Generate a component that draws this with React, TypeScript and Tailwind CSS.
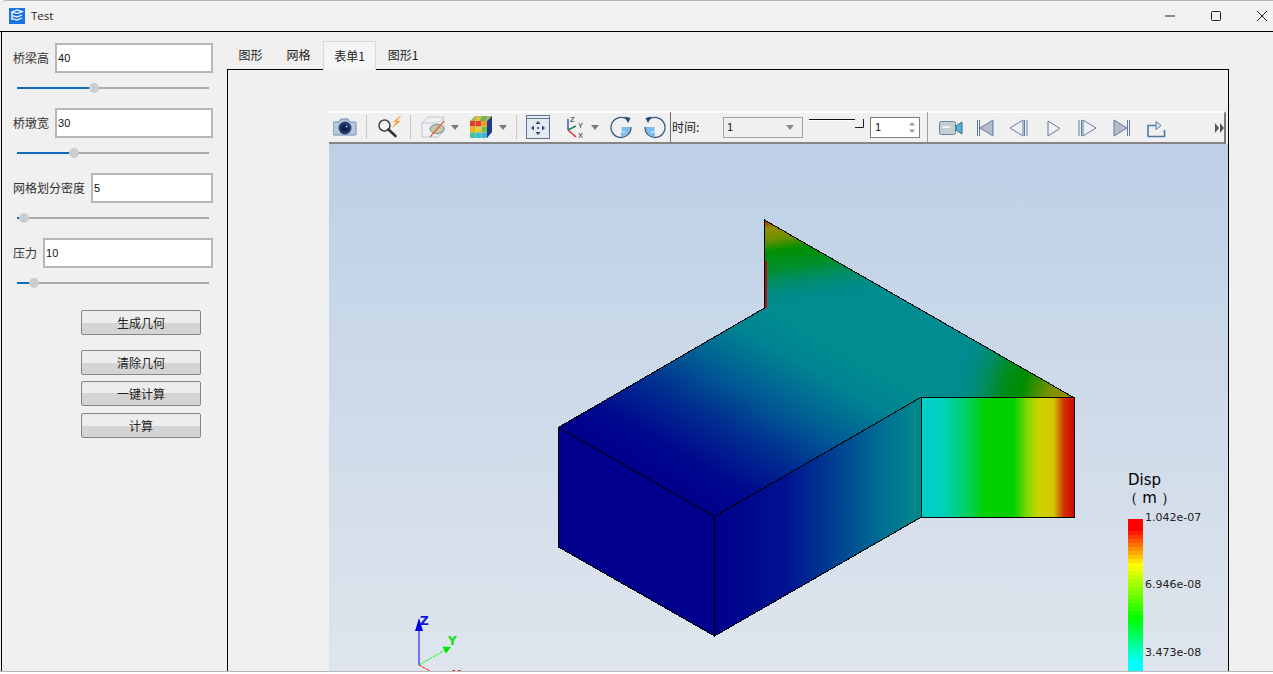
import React from "react";

const cjk = "font-['Noto_Sans_CJK_SC','Noto_Sans',sans-serif]";

const fields = [
  { label: "桥梁高", value: "40", thumb: 77 },
  { label: "桥墩宽", value: "30", thumb: 57 },
  { label: "网格划分密度", value: "5", thumb: 7 },
  { label: "压力", value: "10", thumb: 17 },
];

const buttons = [
  { text: "生成几何", cls: "mt-[12px]" },
  { text: "清除几何", cls: "mt-[15px]" },
  { text: "一键计算", cls: "mt-[6px]" },
  { text: "计算", cls: "mt-[7px]" },
];

const Field = ({ label, value, thumb }: { label: string; value: string; thumb: number }) => (
  <div className="mb-[5px]">
    <div className="flex h-[30px] items-center gap-[6px]">
      <span className="text-[12px] text-[#333]">{label}</span>
      <div className="flex h-[30px] flex-1 items-center border-2 border-[#b7b7b7] bg-white pl-[1px] font-['Liberation_Sans',sans-serif] text-[11px] text-[#111]">
        {value}
      </div>
    </div>
    <div className="relative ml-[4px] flex h-[30px] w-[192px] items-center">
      <div className="h-[2px] w-full bg-[#a9a9a9]" />
      <div className="absolute left-0 top-[14px] h-[2px] bg-[#0f6cbd]" style={{ width: thumb }} />
      <div className="absolute top-[10px] h-[10px] w-[10px] rounded-full bg-[#cdcdcd]" style={{ left: thumb - 5 }} />
    </div>
  </div>
);

const PushButton = ({ text, cls }: { text: string; cls: string }) => (
  <div className={`${cls} ml-[68px] flex h-[25px] w-[120px] items-center justify-center rounded-[2px] border border-[#858585] bg-[linear-gradient(#ededed_0%,#ededed_50%,#d4d4d4_50%,#d4d4d4_100%)] text-[12px] text-[#222]`}>
    {text}
  </div>
);

const Sep = ({ cls }: { cls: string }) => <div className={`${cls} h-[24px] w-[1px] shrink-0 bg-[#c8c8c8]`} />;

const DropArrow = ({ cls }: { cls: string }) => (
  <svg className={`${cls} shrink-0`} width="8" height="5" viewBox="0 0 8 5">
    <path d="M0 0h8L4 5z" fill="#77797c" />
  </svg>
);

const CameraIcon = () => (
  <svg className="ml-[4px] shrink-0" width="24" height="20" viewBox="0 0 24 20">
    <path d="M1 5h5l2-3h7l2 3h5a1 1 0 0 1 1 1v11a1 1 0 0 1-1 1H1a1 1 0 0 1-1-1V6a1 1 0 0 1 1-1z" fill="#b9c9dc" stroke="#6e8cab" />
    <circle cx="12" cy="11" r="6.500" fill="#22406f" />
    <circle cx="12" cy="11" r="3.800" fill="#0d1f48" />
    <circle cx="13.500" cy="9.500" r="1" fill="#a9c4e6" />
  </svg>
);

const SearchIcon = () => (
  <svg className="ml-[11px] shrink-0" width="24" height="24" viewBox="0 0 24 24">
    <path d="M22 1l-7 6h3l-4 6 9-7h-4l4-5z" fill="#efa93b" />
    <circle cx="6.500" cy="10.500" r="5.500" fill="#f4f6f8" stroke="#444" strokeWidth="1.500" />
    <path d="M10.500 14.500l7 6.500" stroke="#333" strokeWidth="2.600" strokeLinecap="round" />
  </svg>
);

const ClipCubeIcon = () => (
  <svg className="ml-[10px] shrink-0" width="24" height="24" viewBox="0 0 24 24">
    <path d="M1 8l6-6h16v14l-6 6H1z" fill="#eef0f3" stroke="#c2c8d0" />
    <path d="M1 8h16v14M17 8l6-6" fill="none" stroke="#c2c8d0" />
    <ellipse cx="16" cy="14" rx="7" ry="4.500" fill="#c8c6ae" stroke="#7f8a96" />
    <path d="M9 22L23 6" stroke="#d9662a" strokeWidth="1.200" />
  </svg>
);

const cubeCells = [
  ["#d8402c", "#e8392c", "#e8a020"],
  ["#f0b020", "#e8d030", "#70c048"],
  ["#48c0a0", "#30c0d0", "#40b0e0"],
];

const RainbowCubeIcon = () => (
  <svg className="ml-[10px] shrink-0" width="24" height="24" viewBox="0 0 24 24">
    <path d="M1 6l5-5h17l-5 5z" fill="#a9b85a" />
    <path d="M6 6l2-5h5l-2 5z" fill="#e0c040" />
    <path d="M11 6l2-5h5l-2 5z" fill="#70b060" />
    <path d="M18 6l5-5v16l-5 6z" fill="#22388c" />
    {cubeCells.map((row, r) =>
      row.map((c, i) => <rect key={`${r}-${i}`} x={1 + i * 5.667} y={6 + r * 5.667} width="5.667" height="5.667" fill={c} />)
    )}
    <path d="M6.700 6v17M12.300 6v17M1 11.700h17M1 17.300h17" stroke="#c8c860" strokeWidth=".5" />
  </svg>
);

const FitIcon = () => (
  <svg className="ml-[9px] shrink-0" width="24" height="24" viewBox="0 0 24 24">
    <rect x=".5" y=".5" width="23" height="23" fill="#e6eaef" stroke="#5d7594" />
    <path d="M.5 3.500h23" stroke="#5d7594" />
    <g fill="#1f4a78">
      <path d="M12 6l2.500 3h-5zM12 20l2.500-3h-5zM5 13l3-2.500v5zM19 13l-3-2.500v5z" />
    </g>
    <circle cx="12" cy="13" r="1" fill="#1f4a78" />
  </svg>
);

const AxesIcon = () => (
  <svg className="ml-[12px] shrink-0" width="24" height="24" viewBox="0 0 24 24">
    <path d="M6 15V4" stroke="#2050c0" strokeWidth="1.400" />
    <path d="M6 15l8-4" stroke="#1c8a4c" strokeWidth="1.400" />
    <path d="M6 15l8 7" stroke="#e02828" strokeWidth="1.400" />
    <text x="8" y="7" fontSize="7.500" fill="#222" fontFamily="Liberation Sans">Z</text>
    <text x="16" y="13" fontSize="7.500" fill="#222" fontFamily="Liberation Sans">Y</text>
    <text x="16" y="23" fontSize="7.500" fill="#222" fontFamily="Liberation Sans">X</text>
  </svg>
);

const RotateIcon = ({ flip, cls }: { flip?: boolean; cls: string }) => (
  <svg className={`${cls} shrink-0 ${flip ? "-scale-x-100" : ""}`} width="24" height="24" viewBox="0 0 24 24">
    <path d="M12 12h9.500a9.500 9.500 0 0 1-9.500 9.500z" fill="#7fbcec" />
    <path d="M12 12v5h4.500" fill="none" stroke="#fff" strokeWidth=".8" />
    <path d="M17 3.800A10 10 0 1 0 22 12" fill="none" stroke="#3a5a7c" strokeWidth="1.300" />
    <path d="M15.500 1.500l6 1.500-2.500 5z" fill="#1f4a78" />
  </svg>
);

const VideoIcon = () => (
  <svg className="ml-[4px] shrink-0" width="24" height="16" viewBox="0 0 24 16">
    <rect x=".5" y="1.500" width="16" height="13" rx="2" fill="#c6ccd4" stroke="#6f8298" />
    <rect x="3" y="6" width="8" height="2" fill="#eef1f4" />
    <path d="M17 6l6-4v12l-6-4z" fill="#4fb8d8" stroke="#356c90" />
  </svg>
);

const stroke = "#5f7da3";

const FirstIcon = () => (
  <svg className="ml-[13px] shrink-0" width="18" height="18" viewBox="0 0 18 18">
    <path d="M17 1L4 9l13 8z" fill="#b5bcc7" stroke={stroke} />
    <path d="M1.500 1v16M3.500 1v16" stroke={stroke} />
  </svg>
);
const PrevIcon = () => (
  <svg className="ml-[15px] shrink-0" width="19" height="18" viewBox="0 0 19 18">
    <path d="M14 1L1 9l13 8z" fill="#eef0f3" stroke={stroke} />
    <path d="M15.500 1v16M18 1v16" stroke={stroke} />
  </svg>
);
const PlayIcon = () => (
  <svg className="ml-[19px] shrink-0" width="14" height="17" viewBox="0 0 14 17">
    <path d="M1 1l12 7.500L1 16z" fill="#eef0f3" stroke={stroke} />
  </svg>
);
const NextIcon = () => (
  <svg className="ml-[17px] shrink-0" width="19" height="18" viewBox="0 0 19 18">
    <path d="M5 1l13 8-13 8z" fill="#eef0f3" stroke={stroke} />
    <path d="M1 1v16M3.500 1v16" stroke={stroke} />
  </svg>
);
const LastIcon = () => (
  <svg className="ml-[16px] shrink-0" width="18" height="18" viewBox="0 0 18 18">
    <path d="M1 1l13 8-13 8z" fill="#b5bcc7" stroke={stroke} />
    <path d="M14.500 1v16M16.500 1v16" stroke={stroke} />
  </svg>
);
const ExportIcon = () => (
  <svg className="ml-[16px] shrink-0" width="19" height="19" viewBox="0 0 19 19">
    <path d="M1 17.500V6.500h8" fill="none" stroke="#4f7aa8" strokeWidth="1.600" />
    <path d="M9 2.500l5 4-5 4z" fill="#dbe6f1" stroke="#4f7aa8" />
    <path d="M1 17.500h16.500V11" fill="none" stroke="#4f7aa8" strokeWidth="1.600" />
  </svg>
);

const Toolbar = () => (
  <div className="mr-[2px] flex h-[33px] shrink-0 items-center border-r-2 border-b-2 border-t-2 border-r-[#7b7b7b] border-b-[#858585] border-t-white bg-[#f0f0f0] pb-[1px]">
    <CameraIcon />
    <Sep cls="ml-[9px]" />
    <SearchIcon />
    <Sep cls="ml-[8px]" />
    <ClipCubeIcon />
    <DropArrow cls="ml-[6px]" />
    <RainbowCubeIcon />
    <DropArrow cls="ml-[6px]" />
    <Sep cls="ml-[9px]" />
    <FitIcon />
    <AxesIcon />
    <DropArrow cls="ml-[5px]" />
    <RotateIcon cls="ml-[10px]" />
    <RotateIcon flip cls="ml-[10px]" />
    <div className="ml-[3px] h-[30px] w-[1px] shrink-0 bg-[#707070]" />
    <span className="ml-[1px] w-[51px] shrink-0 text-[12px] text-[#222]">时间:</span>
    <div className="flex h-[21px] w-[80px] shrink-0 items-center justify-between border border-[#a3a3a3] pl-[3px] pr-[8px] font-['Liberation_Sans',sans-serif] text-[11px] text-[#111]">
      1
      <svg width="8" height="5" viewBox="0 0 8 5">
        <path d="M0 0h8L4 5z" fill="#8a8a8a" />
      </svg>
    </div>
    <svg className="ml-[6px] mb-[6px] shrink-0" width="55" height="10" viewBox="0 0 55 10">
      <path d="M0 .5h46" stroke="#111" />
      <path d="M0 1.500h46" stroke="#fff" />
      <path d="M54.500 0v8.500H46" fill="none" stroke="#222" />
    </svg>
    <div className="ml-[6px] flex h-[21px] w-[50px] shrink-0 items-center justify-between border border-[#7e7e7e] bg-white pl-[4px] pr-[4px] font-['Liberation_Sans',sans-serif] text-[11px] text-[#111]">
      1
      <svg width="6" height="11" viewBox="0 0 6 11">
        <path d="M3 0l3 3.500H0zM3 11l3-3.500H0z" fill="#9a9a9a" />
      </svg>
    </div>
    <div className="ml-[7px] h-[30px] w-[1px] shrink-0 bg-[#a0a0a0]" />
    <div className="ml-[7px] flex h-[30px] flex-1 items-center self-stretch">
      <VideoIcon />
      <FirstIcon />
      <PrevIcon />
      <PlayIcon />
      <NextIcon />
      <LastIcon />
      <ExportIcon />
      <svg className="ml-auto shrink-0" width="9" height="14" viewBox="0 0 9 14">
        <path d="M0 2l4 5-4 5z M5 2l4 5-4 5z" fill="#555" />
      </svg>
    </div>
  </div>
);

// Field result drawn on the model, coordinates are the screen ones
const ModelSvg = () => (
  <svg className="absolute left-0 top-0" width="899" height="530" viewBox="329 144 899 530">
    <defs>
      <linearGradient id="topFace" gradientUnits="userSpaceOnUse" x1="558" y1="427" x2="660" y2="248.500">
        <stop offset="0" stopColor="#00008c" />
        <stop offset=".18" stopColor="#00088e" />
        <stop offset=".42" stopColor="#003090" />
        <stop offset=".62" stopColor="#005c94" />
        <stop offset=".85" stopColor="#008392" />
        <stop offset="1" stopColor="#008c90" />
      </linearGradient>
      <linearGradient id="sideFace" gradientUnits="userSpaceOnUse" x1="714" y1="0" x2="921" y2="0">
        <stop offset="0" stopColor="#00008c" />
        <stop offset=".35" stopColor="#001290" />
        <stop offset=".63" stopColor="#004a94" />
        <stop offset=".82" stopColor="#007092" />
        <stop offset="1" stopColor="#008a8c" />
      </linearGradient>
      <linearGradient id="endFace" gradientUnits="userSpaceOnUse" x1="921" y1="0" x2="1075" y2="0">
        <stop offset="0" stopColor="#00d0c8" />
        <stop offset=".14" stopColor="#00d0bc" />
        <stop offset=".3" stopColor="#00d060" />
        <stop offset=".42" stopColor="#00d000" />
        <stop offset=".6" stopColor="#00d000" />
        <stop offset=".7" stopColor="#90d800" />
        <stop offset=".77" stopColor="#d0d000" />
        <stop offset=".86" stopColor="#d0c800" />
        <stop offset=".93" stopColor="#d03000" />
        <stop offset="1" stopColor="#d00000" />
      </linearGradient>
      <linearGradient id="apex" gradientUnits="userSpaceOnUse" x1="764" y1="220" x2="776" y2="308">
        <stop offset="0" stopColor="#a02800" />
        <stop offset=".1" stopColor="#909000" />
        <stop offset=".22" stopColor="#709000" />
        <stop offset=".36" stopColor="#009000" />
        <stop offset=".58" stopColor="#008f30" />
        <stop offset="1" stopColor="#008c90" stopOpacity="0" />
      </linearGradient>
      <radialGradient id="corner" gradientUnits="userSpaceOnUse" cx="1078" cy="400" r="125">
        <stop offset="0" stopColor="#a03000" />
        <stop offset=".1" stopColor="#909000" />
        <stop offset=".24" stopColor="#7a9000" />
        <stop offset=".46" stopColor="#008c00" />
        <stop offset=".62" stopColor="#008c20" />
        <stop offset=".82" stopColor="#008c60" stopOpacity=".6" />
        <stop offset="1" stopColor="#008c90" stopOpacity="0" />
      </radialGradient>
      <clipPath id="topClip">
        <polygon points="558,427 764.500,308 764.500,220 1074.500,398 921,397 714,516" />
      </clipPath>
    </defs>
    <g shapeRendering="crispEdges">
      <polygon points="558,427 714,516 714,636 558,547" fill="#00008c" />
      <polygon points="714,516 921,397 921,517 714,636" fill="url(#sideFace)" />
      <polygon points="558,427 764.500,308 764.500,220 1074.500,398 921,397 714,516" fill="url(#topFace)" />
      <g clipPath="url(#topClip)">
        <rect x="740" y="200" width="180" height="120" fill="url(#apex)" />
        <rect x="945" y="270" width="140" height="130" fill="url(#corner)" />
      </g>
      <rect x="921" y="397" width="153.500" height="120" fill="url(#endFace)" />
      <rect x="765" y="261" width="2" height="47" fill="#b01018" />
      <g fill="none" stroke="#000" strokeWidth="1">
        <path d="M558.500 427.500L714.500 516.500L921.500 397M714.500 516.500V636M558.500 427.500V547L714.500 636L921.500 517" />
        <path d="M558.500 427.500L764.500 308V220L1074.500 398V517H921.500V397H1074.500" />
      </g>
    </g>
    <g>
      <path d="M419 665V626" stroke="#0000ff" strokeWidth="1" />
      <path d="M419 618l4 13h-8z" fill="#0000e8" />
      <path d="M419 665l26-15" stroke="#00ff00" strokeDasharray="3 1" />
      <path d="M451 647l-8.500-.5 3.500 7z" fill="#00e800" />
      <path d="M419 665l11 6" stroke="#ff0000" strokeDasharray="3 1" />
      <text x="420" y="625" fontSize="12" fontWeight="700" fill="#1010e0" fontFamily="DejaVu Sans">Z</text>
      <text x="448" y="645" fontSize="12" fontWeight="700" fill="#10e010" fontFamily="DejaVu Sans">Y</text>
      <text x="452" y="679" fontSize="12" fontWeight="700" fill="#f01010" fontFamily="DejaVu Sans">X</text>
    </g>
  </svg>
);

const bandHue = (y: number) => {
  if (y < 8) return 0;
  if (y < 44) return ((y - 8) * 60) / 36;
  if (y < 98) return 60 + ((y - 44) * 60) / 54;
  return Math.min(180, 120 + ((y - 98) * 60) / 43);
};

const bands = Array.from({ length: 40 }, (_, i) => `hsl(${bandHue(i * 4)} 100% 50%)`);

const Legend = () => (
  <div className="absolute left-[799px] top-[327px] font-['DejaVu_Sans',sans-serif] text-black">
    <div className="text-[15px] leading-[18px]">Disp</div>
    <div className="-ml-[5px] whitespace-nowrap text-[15px] leading-[18px] tracking-[-0.3px]">（ m ）</div>
    <div className="relative mt-[12px] h-[160px] w-[15px]">
      {bands.map((c, i) => (
        <div key={i} className="h-[4px] w-full" style={{ backgroundColor: c }} />
      ))}
      <span className="absolute left-[17px] top-[-9px] whitespace-nowrap text-[11px] leading-[16px] text-[#222]">1.042e-07</span>
      <span className="absolute left-[17px] top-[58px] whitespace-nowrap text-[11px] leading-[16px] text-[#222]">6.946e-08</span>
      <span className="absolute left-[17px] top-[126px] whitespace-nowrap text-[11px] leading-[16px] text-[#222]">3.473e-08</span>
    </div>
  </div>
);

const TitleBar = () => (
  <div className="flex h-[31px] shrink-0 items-center rounded-tl-[6px] border-t border-t-[#b4b4b4] bg-[#f3f2f0] pl-[9px]">
    <svg width="16" height="16" viewBox="0 0 16 16">
      <rect width="16" height="16" fill="#1a73e8" />
      <path d="M3 4l5-2 5 1.500-5 2zM3 7.500l5 1.500 5-2M3 10.500l5 1.500 5-2" fill="none" stroke="#fff" strokeWidth="1.300" />
      <path d="M3 4v8" stroke="#fff" strokeWidth="1.300" />
    </svg>
    <span className="ml-[6px] font-['Open_Sans',sans-serif] text-[11.500px] text-[#222]">Test</span>
    <div className="ml-auto flex items-center">
      <svg width="10" height="2" viewBox="0 0 10 2" className="shrink-0">
        <path d="M0 1h10" stroke="#222" />
      </svg>
      <svg width="10" height="10" viewBox="0 0 10 10" className="ml-[36px] shrink-0">
        <rect x=".5" y=".5" width="9" height="9" rx="1" fill="none" stroke="#222" />
      </svg>
      <svg width="10" height="10" viewBox="0 0 10 10" className="ml-[36px] mr-[6px] shrink-0">
        <path d="M0 0l10 10M10 0L0 10" stroke="#222" />
      </svg>
    </div>
  </div>
);

const tabs = [
  { text: "图形", cls: "w-[47px]" },
  { text: "网格", cls: "w-[49px]" },
  { text: "表单1", cls: "w-[53px] h-[29px] border border-b-0 border-[#d9d9d9] bg-[#f4f4f4] z-10 -mb-[1px]" },
  { text: "图形1", cls: "w-[54px]" },
];

export default function App() {
  return (
    <div className={`flex h-[674px] w-[1273px] flex-col overflow-hidden bg-white ${cjk}`}>
      <TitleBar />
      <div className="flex h-[641px] shrink-0 border-t border-b border-t-black border-b-[#b8b8b8] bg-[#f0f0f0] pl-[1px]">
        <div className="w-[226px] shrink-0 border-l border-l-black pl-[11px] pr-[14px] pt-[11px]">
          {fields.map((f) => (
            <Field key={f.label} {...f} />
          ))}
          {buttons.map((b) => (
            <PushButton key={b.text} {...b} />
          ))}
        </div>
        <div className="flex w-[1002px] shrink-0 flex-col">
          <div className="flex h-[37px] shrink-0 items-end">
            {tabs.map((t) => (
              <div key={t.text} className={`${t.cls} relative flex h-[28px] items-center justify-center text-[12px] text-[#222]`}>
                {t.text}
              </div>
            ))}
          </div>
          <div className="flex flex-1 flex-col overflow-hidden border border-b-0 border-black pl-[101px] pt-[41px]">
            <Toolbar />
            <div className="relative flex-1 bg-[linear-gradient(#bdd0e6,#dfe5ed)]">
              <ModelSvg />
              <Legend />
            </div>
          </div>
        </div>
      </div>
    </div>
  );
}
